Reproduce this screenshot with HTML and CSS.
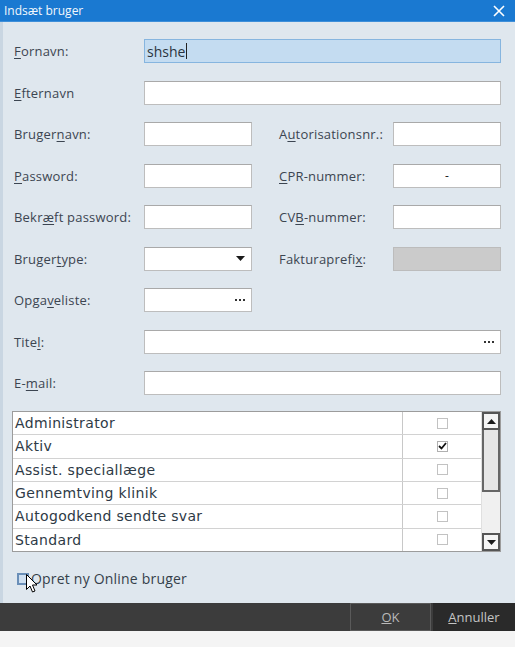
FILE: index.html
```html
<!DOCTYPE html>
<html lang="da">
<head>
<meta charset="utf-8">
<title>Indsæt bruger</title>
<link rel="stylesheet" href="styles.css">
</head>
<body>
<div class="dialog">
  <div class="titlebar">
    <span class="title">Indsæt bruger</span>
    <svg class="close" width="12" height="12" viewBox="0 0 12 12"><path d="M1 1L11 11M11 1L1 11" stroke="#fff" stroke-width="1.6"/></svg>
  </div>
  <div class="content">
    <div class="form">
      <label class="lbl"><u>F</u>ornavn:</label>
      <div class="inp wide focus"><span class="val">shshe</span><span class="caret"></span></div>

      <label class="lbl"><u>E</u>fternavn</label>
      <div class="inp wide"></div>

      <label class="lbl">Bruger<u>n</u>avn:</label>
      <div class="inp"></div>
      <label class="lbl rl">A<u>u</u>torisationsnr.:</label>
      <div class="inp"></div>

      <label class="lbl"><u>P</u>assword:</label>
      <div class="inp"></div>
      <label class="lbl rl"><u>C</u>PR-nummer:</label>
      <div class="inp center">-</div>

      <label class="lbl">Bekr<u>æ</u>ft password:</label>
      <div class="inp"></div>
      <label class="lbl rl">CV<u>B</u>-nummer:</label>
      <div class="inp"></div>

      <label class="lbl">Bruger<u>t</u>ype:</label>
      <div class="inp combo"><svg class="arrow" width="9" height="5" viewBox="0 0 9 5"><path d="M0 0H9L4.5 5Z" fill="#1a1a1a"/></svg></div>
      <label class="lbl rl">Fakturaprefi<u>x</u>:</label>
      <div class="inp disabled"></div>

      <label class="lbl">Opga<u>v</u>eliste:</label>
      <div class="inp combo"><span class="dots"><i></i><i></i><i></i></span></div>

      <label class="lbl">Tite<u>l</u>:</label>
      <div class="inp wide combo"><span class="dots"><i></i><i></i><i></i></span></div>

      <label class="lbl">E-<u>m</u>ail:</label>
      <div class="inp wide"></div>
    </div>

    <div class="grid">
      <div class="rows">
        <div class="row"><span class="name">Administrator</span><span class="chk"><span class="box"></span></span></div>
        <div class="row"><span class="name">Aktiv</span><span class="chk"><span class="box checked"><svg width="9" height="8" viewBox="0 0 9 8"><path d="M1 4L3.5 6.5L8 1" stroke="#111" stroke-width="1.8" fill="none"/></svg></span></span></div>
        <div class="row"><span class="name">Assist. speciallæge</span><span class="chk"><span class="box"></span></span></div>
        <div class="row"><span class="name">Gennemtving klinik</span><span class="chk"><span class="box"></span></span></div>
        <div class="row"><span class="name">Autogodkend sendte svar</span><span class="chk"><span class="box"></span></span></div>
        <div class="row"><span class="name">Standard</span><span class="chk"><span class="box"></span></span></div>
      </div>
      <div class="scrollbar">
        <div class="sbtn"><svg width="9" height="5" viewBox="0 0 9 5"><path d="M0 5H9L4.5 0Z" fill="#1a1a1a"/></svg></div>
        <div class="thumb"></div>
        <div class="track"></div>
        <div class="sbtn"><svg width="9" height="5" viewBox="0 0 9 5"><path d="M0 0H9L4.5 5Z" fill="#1a1a1a"/></svg></div>
      </div>
    </div>

    <div class="online">
      <span class="obox"></span>
      <span class="otext">Opret ny Online bruger</span>
      <svg class="cursor" width="12" height="19" viewBox="0 0 12 19"><path d="M0.5 0.5V15.5L4 12L6.5 18L9 17L6.5 11H11Z" fill="#fff" stroke="#000" stroke-width="1"/></svg>
    </div>
  </div>
  <div class="buttonbar">
    <div class="btn ok"><u>O</u>K</div>
    <div class="btn cancel"><u>A</u>nnuller</div>
  </div>
  <div class="bottom"></div>
</div>
</body>
</html>
```
FILE: styles.css
```css
html, body {
  margin: 0;
  padding: 0;
  background: #f3f3f3;
}
body {
  width: 515px;
  height: 647px;
  overflow: hidden;
  font-family: "Open Sans", "Noto Sans", sans-serif;
  font-size: 13px;
  color: #3a3a3a;
}
.dialog {
  width: 515px;
  height: 647px;
  display: flex;
  flex-direction: column;
}
.titlebar {
  height: 22px;
  background: #1a79d1;
  display: flex;
  align-items: center;
  justify-content: space-between;
  padding: 0 10px 0 4px;
  border-bottom: 1px solid #3f8fd9;
  box-sizing: border-box;
}
.title {
  color: #f2f7fc;
  font-size: 12px;
}
.close { display: block; }
.content {
  background: #dfe7ee;
  border-left: 3px solid #c9d6e2;
  flex: none;
  height: 581px;
  box-sizing: border-box;
  padding: 17px 14px 0 11px;
  display: flex;
  flex-direction: column;
}
.form {
  display: grid;
  grid-template-columns: 130px 108px 27px 114px 108px;
  grid-auto-rows: 24px;
  row-gap: 17.5px;
  align-items: center;
}
.lbl {
  grid-column: 1;
  white-space: nowrap;
  color: #3c4551;
  font-size: 13px;
  letter-spacing: 0.2px;
}
.lbl.rl { grid-column: 4; }
.lbl u { text-decoration-thickness: 1px; text-underline-offset: 2px; }
.inp {
  height: 24px;
  box-sizing: border-box;
  background: #fff;
  border: 1px solid #bdbdbd;
  border-top-color: #a9a9a9;
  display: flex;
  align-items: center;
  position: relative;
}
.inp.wide { grid-column: 2 / 6; }
.inp.focus {
  background: #c4dcf1;
  border: 1px solid #86b5df;
  padding-left: 2px;
}
.val {
  font-size: 14px;
  color: #2a3440;
}
.caret {
  display: inline-block;
  width: 1px;
  height: 16px;
  background: #222;
  margin-left: 1px;
}
.inp.center {
  justify-content: center;
  color: #222;
  font-size: 12px;
}
.inp.disabled {
  background: #cbcbcb;
  border-color: #bcbcbc;
}
.inp.combo { justify-content: flex-end; padding-right: 6px; }
.arrow { display: block; }
.dots {
  display: flex;
  gap: 2px;
}
.dots i {
  width: 2px;
  height: 2px;
  background: #333;
  display: block;
}
.grid {
  margin-top: 16px;
  margin-left: -2px;
  height: 141px;
  box-sizing: border-box;
  border: 1px solid #9c9c9c;
  background: #fff;
  display: flex;
}
.rows {
  flex: 1;
  display: flex;
  flex-direction: column;
}
.row {
  flex: 1;
  display: flex;
  border-bottom: 1px solid #d2d2d2;
}
.row:last-child { border-bottom: none; }
.name {
  width: 390px;
  padding-left: 2px;
  box-sizing: border-box;
  border-right: 1px solid #c8c8c8;
  font-family: "DejaVu Sans", sans-serif;
  font-size: 14px;
  letter-spacing: 0.35px;
  color: #2e3a46;
  display: flex;
  align-items: center;
}
.chk {
  flex: 1;
  display: flex;
  align-items: center;
  justify-content: center;
}
.box {
  width: 11px;
  height: 11px;
  box-sizing: border-box;
  border: 1px solid #c2c2c2;
  background: #fff;
  display: flex;
  align-items: center;
  justify-content: center;
}
.box.checked { border-color: #b0b0b0; }
.scrollbar {
  width: 18px;
  display: flex;
  flex-direction: column;
  background: #f0f0f0;
  border-left: 1px solid #e0e0e0;
}
.sbtn {
  height: 18px;
  box-sizing: border-box;
  border: 2px solid #555;
  background: #f4f4f4;
  display: flex;
  align-items: center;
  justify-content: center;
}
.thumb {
  height: 62px;
  box-sizing: border-box;
  border: 2px solid #666;
  border-top: none;
  background: #e6e6e6;
}
.track { flex: 1; background: #f0f0f0; }
.online {
  margin-top: 17px;
  margin-left: 3px;
  display: flex;
  align-items: center;
  position: relative;
}
.obox {
  width: 12px;
  height: 12px;
  box-sizing: border-box;
  border: 2px solid #6a8fb8;
  background: #cfe0f1;
  margin-right: 2px;
}
.otext {
  font-size: 14px;
  letter-spacing: 0.2px;
  color: #353f4a;
}
.cursor {
  position: absolute;
  left: 9px;
  top: 5px;
}
.buttonbar {
  height: 28px;
  background: #3c3c3c;
  display: flex;
  justify-content: flex-end;
  align-items: stretch;
}
.btn {
  display: flex;
  align-items: center;
  justify-content: center;
  color: #b9b9b9;
  font-size: 13px;
  box-sizing: border-box;
}
.btn.ok {
  width: 81px;
  border: 1px solid #5a5a5a;
  margin-right: 2px;
}
.btn.cancel {
  width: 82px;
  background: #2a2a2a;
  color: #c4c4c4;
}
.bottom {
  flex: 1;
  background: #f4f4f4;
}
```
